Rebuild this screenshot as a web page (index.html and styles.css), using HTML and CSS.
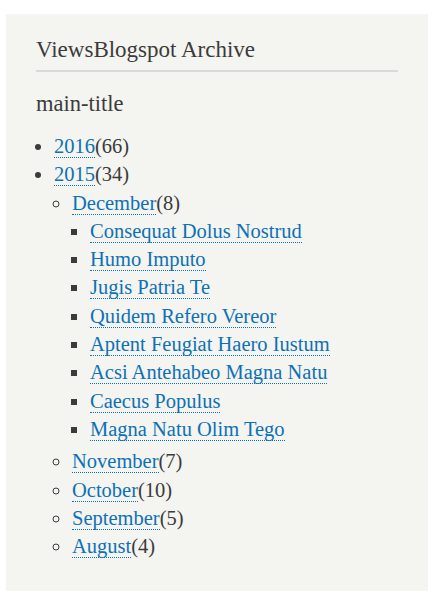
FILE: index.html
```html
<!DOCTYPE html>
<html lang="en">
<head>
    <meta charset="UTF-8">
    <meta name="viewport" content="width=device-width, initial-scale=1.0">
    <title>ViewsBlogspot Archive</title>
    <link rel="stylesheet" href="styles.css">
</head>
<body>

    <div class="block">
        <h2 class="block-title">ViewsBlogspot Archive</h2>

        <h3 class="main-title">main-title</h3>

        <ul class="years">
            <li><a href="#">2016</a>(66)</li>
            <li><a href="#">2015</a>(34)
                <ul class="months">
                    <li><a href="#">December</a>(8)
                        <ul class="posts">
                            <li><a href="#">Consequat Dolus Nostrud</a></li>
                            <li><a href="#">Humo Imputo</a></li>
                            <li><a href="#">Jugis Patria Te</a></li>
                            <li><a href="#">Quidem Refero Vereor</a></li>
                            <li><a href="#">Aptent Feugiat Haero Iustum</a></li>
                            <li><a href="#">Acsi Antehabeo Magna Natu</a></li>
                            <li><a href="#">Caecus Populus</a></li>
                            <li><a href="#">Magna Natu Olim Tego</a></li>
                        </ul>
                    </li>
                    <li><a href="#">November</a>(7)</li>
                    <li><a href="#">October</a>(10)</li>
                    <li><a href="#">September</a>(5)</li>
                    <li><a href="#">August</a>(4)</li>
                </ul>
            </li>
        </ul>
    </div>

</body>
</html>
```

FILE: styles.css
```css
body {
    margin: 0;
    padding: 14px 12px 7px 6px;
    background: #fff;
    font-family: "Liberation Serif", Georgia, serif;
    color: #3b3b3b;
}
.block {
    background: #f4f4f1;
    padding: 22px 30px 30px 30px;
    height: 525px;
}
.block-title {
    font-size: 23px;
    font-weight: normal;
    margin: 0;
    padding-bottom: 6px;
    border-bottom: 2px solid #d9d9d9;
    line-height: 28px;
}
.main-title {
    font-size: 22.5px;
    font-weight: normal;
    margin: 18px 0 14px 0;
    line-height: 28px;
}
ul {
    margin: 0;
    padding-left: 18px;
    font-size: 20.5px;
    line-height: 28.3px;
}
.years {
    list-style: disc;
}
.months {
    list-style: circle;
}
.posts {
    list-style: square;
    margin-bottom: 4px;
}
a {
    color: #0e71b5;
    text-decoration: none;
    border-bottom: 1px dotted #0e71b5;
}
```
